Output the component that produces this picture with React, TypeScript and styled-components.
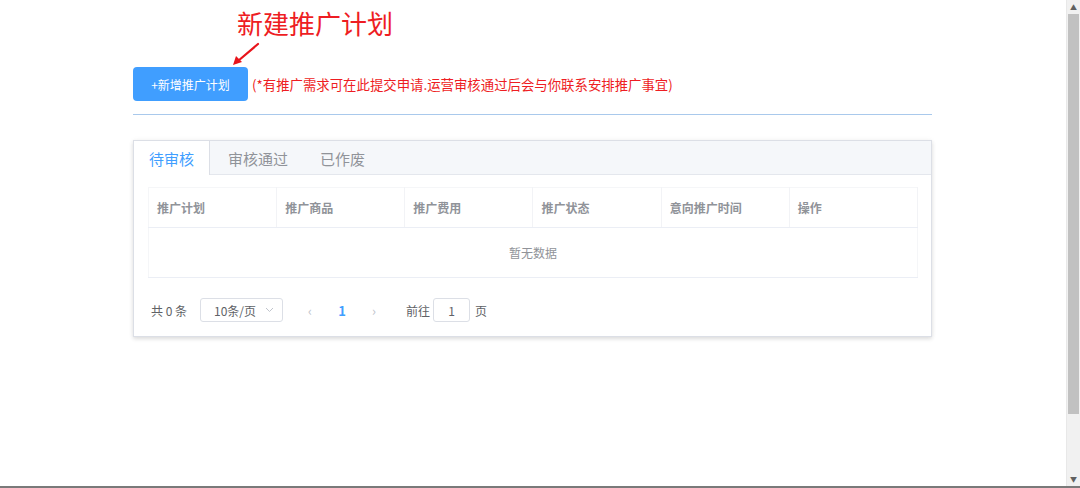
import styled, { createGlobalStyle } from "styled-components";

const GlobalStyle = createGlobalStyle`
  html, body {
    margin: 0;
    padding: 0;
    background: #fff;
    font-family: "Noto Sans CJK SC", "Noto Sans", sans-serif;
  }
  * { box-sizing: border-box; }
`;

const Page = styled.div`
  display: flex;
  height: 488px;
  border-bottom: 2px solid #7a7a7a;
  overflow: hidden;
`;

const Main = styled.main`
  flex: 1;
  padding: 4px 0 0 133px;
`;

const Content = styled.div`
  width: 799px;
`;

const Annotation = styled.h1`
  margin: 0 0 0 104px;
  font-size: 26px;
  font-weight: 400;
  line-height: 38px;
  color: #ee1d23;
`;

const ArrowMark = styled.svg`
  display: block;
  margin-left: 98px;
  width: 32px;
  height: 25px;
`;

const Toolbar = styled.div`
  display: flex;
  align-items: center;
  gap: 4px;
  padding-bottom: 13px;
  border-bottom: 1px solid #a9c9ec;
`;

const PrimaryButton = styled.button`
  width: 115px;
  height: 34px;
  border: none;
  border-radius: 4px;
  background: #409eff;
  color: #fff;
  font-family: inherit;
  font-size: 12px;
  cursor: pointer;
`;

const Note = styled.span`
  font-size: 13.4px;
  color: #ee1d23;
`;

const Card = styled.section`
  margin-top: 25px;
  border: 1px solid #dcdfe6;
  box-shadow: 0 2px 4px rgba(0, 0, 0, 0.12), 0 0 6px rgba(0, 0, 0, 0.04);
  background: #fff;
`;

const TabBar = styled.div`
  display: flex;
  height: 34px;
  background: #f5f7fa;
  border-bottom: 1px solid #e4e7ed;
`;

const Tab = styled.div<{ $active?: boolean }>`
  display: flex;
  align-items: center;
  padding: 0 15px;
  margin-bottom: -1px;
  font-size: 15px;
  color: ${(p) => (p.$active ? "#409eff" : "#909399")};
  background: ${(p) => (p.$active ? "#fff" : "transparent")};
  border-right: 1px solid ${(p) => (p.$active ? "#dcdfe6" : "transparent")};
  margin-right: ${(p) => (p.$active ? "3px" : "1px")};
`;

const Body = styled.div`
  padding: 12px 13px 14px 14px;
`;

const Table = styled.table`
  width: 100%;
  border-collapse: collapse;
  table-layout: fixed;
  font-size: 12px;
`;

const Th = styled.th`
  height: 40px;
  padding: 0 8px;
  text-align: left;
  font-weight: 700;
  color: #909399;
  border-bottom: 1px solid #ebeef5;
  border-right: 1px solid #f2f3f6;
  border-top: 1px solid #f5f6f8;
  &:first-child { border-left: 1px solid #f5f6f8; }
`;

const EmptyCell = styled.td`
  height: 50px;
  text-align: center;
  color: #909399;
  border-bottom: 1px solid #ebeef5;
  border-left: 1px solid #f5f6f8;
  border-right: 1px solid #f5f6f8;
`;

const Pager = styled.div`
  display: flex;
  align-items: center;
  margin-top: 20px;
  padding-left: 3px;
  height: 24px;
  font-size: 12px;
  color: #606266;
`;

const Total = styled.span`
  margin-right: 13px;
`;

const SizeSelect = styled.div`
  display: flex;
  align-items: center;
  justify-content: space-between;
  width: 83px;
  height: 24px;
  padding: 0 8px 0 13px;
  border: 1px solid #dcdfe6;
  border-radius: 3px;
  font-size: 12px;
  color: #606266;
`;

const PageNav = styled.span<{ $current?: boolean }>`
  width: 32px;
  text-align: center;
  font-size: 13px;
  font-weight: ${(p) => (p.$current ? 700 : 400)};
  color: ${(p) => (p.$current ? "#409eff" : "#c0c4cc")};
`;

const Pages = styled.div`
  display: flex;
  align-items: center;
  margin-left: 11px;
  margin-right: 16px;
`;

const Jumper = styled.div`
  display: flex;
  align-items: center;
  gap: 3px;
`;

const JumpInput = styled.div`
  width: 37px;
  height: 24px;
  margin-right: 2px;
  border: 1px solid #dcdfe6;
  border-radius: 3px;
  display: flex;
  align-items: center;
  justify-content: center;
  color: #606266;
`;

const Scrollbar = styled.div`
  width: 14px;
  display: flex;
  flex-direction: column;
  background: #f1f1f1;
  border-left: 1px solid #e8e8e8;
`;

const ScrollBtn = styled.div`
  height: 14px;
  display: flex;
  align-items: center;
  justify-content: center;
  font-size: 7px;
  color: #606060;
`;

const Thumb = styled.div`
  height: 400px;
  margin: 0 1px;
  background: #c1c1c1;
`;

const Spacer = styled.div`
  flex: 1;
`;

const columns = ["推广计划", "推广商品", "推广费用", "推广状态", "意向推广时间", "操作"];

export default function App() {
  return (
    <>
      <GlobalStyle />
      <Page>
        <Main>
          <Content>
            <Annotation>新建推广计划</Annotation>
            <ArrowMark viewBox="0 0 32 25">
              <line x1="27" y1="2" x2="7" y2="19" stroke="#e8141b" strokeWidth="2.2" strokeLinecap="round" />
              <polygon points="2,23 5,14 11,20" fill="#e8141b" />
            </ArrowMark>
            <Toolbar>
              <PrimaryButton>+新增推广计划</PrimaryButton>
              <Note>(*有推广需求可在此提交申请.运营审核通过后会与你联系安排推广事宜)</Note>
            </Toolbar>
            <Card>
              <TabBar>
                <Tab $active>待审核</Tab>
                <Tab>审核通过</Tab>
                <Tab>已作废</Tab>
              </TabBar>
              <Body>
                <Table>
                  <thead>
                    <tr>
                      {columns.map((c) => (
                        <Th key={c}>{c}</Th>
                      ))}
                    </tr>
                  </thead>
                  <tbody>
                    <tr>
                      <EmptyCell colSpan={6}>暂无数据</EmptyCell>
                    </tr>
                  </tbody>
                </Table>
                <Pager>
                  <Total>共 0 条</Total>
                  <SizeSelect>
                    <span>10条/页</span>
                    <svg width="9" height="6" viewBox="0 0 9 6">
                      <path d="M1 1 L4.5 4.5 L8 1" fill="none" stroke="#c0c4cc" strokeWidth="1" />
                    </svg>
                  </SizeSelect>
                  <Pages>
                    <PageNav>&lsaquo;</PageNav>
                    <PageNav $current>1</PageNav>
                    <PageNav>&rsaquo;</PageNav>
                  </Pages>
                  <Jumper>
                    <span>前往</span>
                    <JumpInput>1</JumpInput>
                    <span>页</span>
                  </Jumper>
                </Pager>
              </Body>
            </Card>
          </Content>
        </Main>
        <Scrollbar>
          <ScrollBtn>▲</ScrollBtn>
          <Thumb />
          <Spacer />
          <ScrollBtn>▼</ScrollBtn>
        </Scrollbar>
      </Page>
    </>
  );
}
